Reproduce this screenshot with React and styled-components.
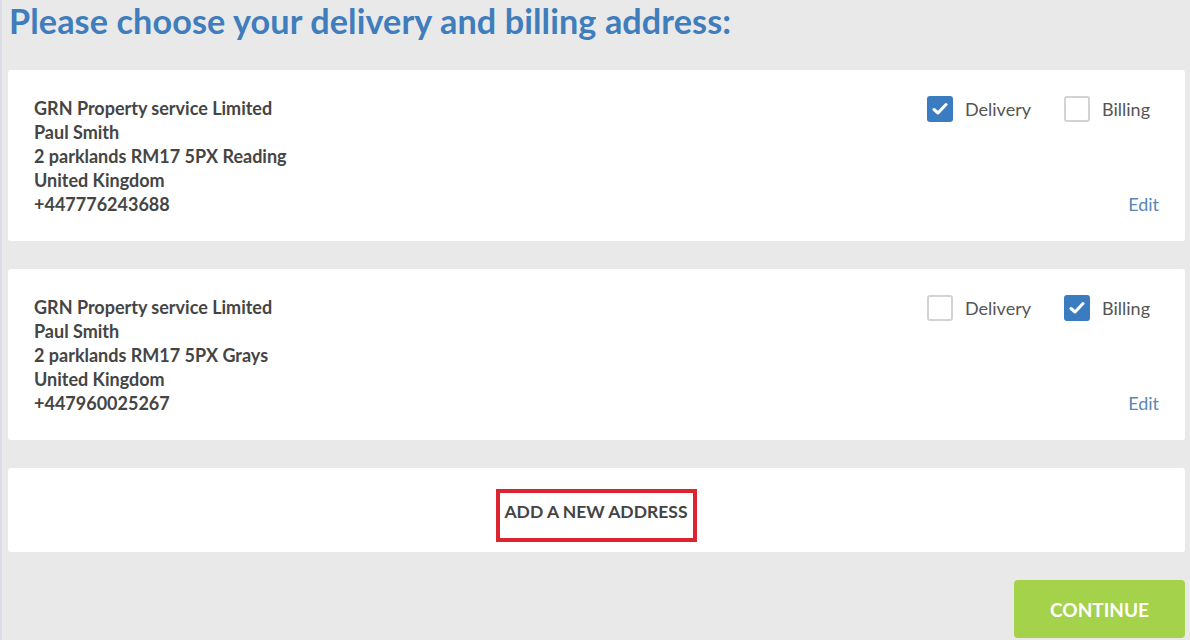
import React from "react";
import styled, { createGlobalStyle } from "styled-components";

const Global = createGlobalStyle`
  html, body { margin: 0; padding: 0; }
  body {
    background: #e9e9e9;
    font-family: Lato, "Open Sans", "Liberation Sans", sans-serif;
    color: #444;
  }
`;

const Page = styled.div`
  width: 1190px;
  height: 640px;
  box-sizing: border-box;
  padding: 0 5px 0 6px;
  border-left: 2px solid #dadbe4;
  overflow: hidden;
`;

const Title = styled.h1`
  margin: 0 0 0 1px;
  padding-top: 1px;
  height: 69px;
  font-size: 34.2px;
  font-weight: 700;
  color: #3f7dbd;
  line-height: 40px;
  letter-spacing: 0.1px;
`;

const Card = styled.div`
  background: #fff;
  border-radius: 3px;
  display: flex;
  justify-content: space-between;
  padding: 26px 26px 25px 26px;
  margin-bottom: 28px;
`;

const Address = styled.div`
  font-size: 18px;
  font-weight: 700;
  line-height: 24px;
  color: #454545;
`;

const Side = styled.div`
  display: flex;
  flex-direction: column;
  justify-content: space-between;
  align-items: flex-end;
`;

const Options = styled.div`
  display: flex;
  gap: 33px;
  margin-right: 9px;
`;

const Option = styled.label`
  display: flex;
  align-items: center;
  gap: 12px;
  font-size: 18px;
  color: #555;
  height: 26px;
`;

const Box = styled.span`
  width: 26px;
  height: 26px;
  box-sizing: border-box;
  border-radius: 3px;
  display: flex;
  align-items: center;
  justify-content: center;
  background: ${(p) => (p.$checked ? "#3b7cc0" : "#fff")};
  border: 2px solid ${(p) => (p.$checked ? "#3b7cc0" : "#d3d3d3")};
`;

const Edit = styled.a`
  font-size: 18px;
  color: #5b87b3;
  line-height: 24px;
  text-decoration: none;
`;

const AddCard = styled.div`
  background: #fff;
  border-radius: 3px;
  height: 84px;
  display: flex;
  align-items: center;
  justify-content: center;
  margin-bottom: 28px;
`;

const AddButton = styled.div`
  border: 4px solid #dc2431;
  width: 201px;
  height: 53px;
  box-sizing: border-box;
  display: flex;
  align-items: center;
  justify-content: center;
  padding-bottom: 7px;
  font-size: 17.5px;
  font-weight: 700;
  color: #444;
  margin-left: -1px;
  margin-top: 10px;
`;

const Footer = styled.div`
  display: flex;
  justify-content: flex-end;
`;

const Continue = styled.button`
  width: 171px;
  height: 58px;
  border: none;
  border-radius: 4px;
  background: #a5d24b;
  color: #fff;
  font-family: inherit;
  font-size: 19px;
  font-weight: 700;
`;

const Check = () => (
  <svg width="16" height="14" viewBox="0 0 16 14">
    <path d="M2 7.5 L6 11 L14 2.5" fill="none" stroke="#fff" strokeWidth="3" strokeLinecap="round" strokeLinejoin="round" />
  </svg>
);

const CheckOption = ({ checked, label }) => (
  <Option>
    <Box $checked={checked}>{checked && <Check />}</Box>
    {label}
  </Option>
);

const addresses = [
  { lines: ["GRN Property service Limited", "Paul Smith", "2 parklands RM17 5PX Reading", "United Kingdom", "+447776243688"], delivery: true, billing: false },
  { lines: ["GRN Property service Limited", "Paul Smith", "2 parklands RM17 5PX Grays", "United Kingdom", "+447960025267"], delivery: false, billing: true },
];

export default function App() {
  return (
    <>
      <Global />
      <Page>
        <Title>Please choose your delivery and billing address:</Title>
        {addresses.map((a, i) => (
          <Card key={i}>
            <Address>
              {a.lines.map((l) => (
                <div key={l}>{l}</div>
              ))}
            </Address>
            <Side>
              <Options>
                <CheckOption checked={a.delivery} label="Delivery" />
                <CheckOption checked={a.billing} label="Billing" />
              </Options>
              <Edit href="#">Edit</Edit>
            </Side>
          </Card>
        ))}
        <AddCard>
          <AddButton>ADD A NEW ADDRESS</AddButton>
        </AddCard>
        <Footer>
          <Continue>CONTINUE</Continue>
        </Footer>
      </Page>
    </>
  );
}
